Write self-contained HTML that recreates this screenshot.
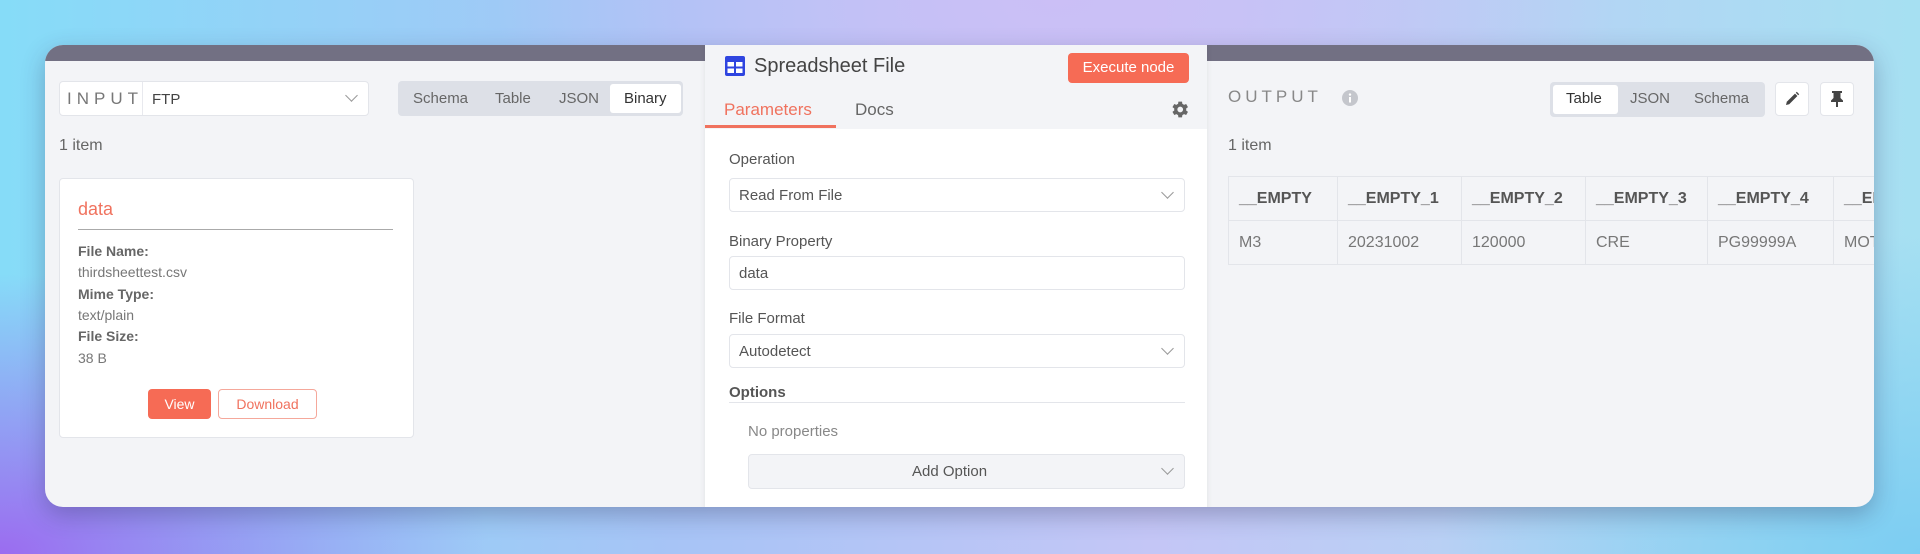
<!DOCTYPE html>
<html><head><meta charset="utf-8"><style>
*{box-sizing:border-box;margin:0;padding:0}
body{width:1920px;height:554px;overflow:hidden;font-family:"Liberation Sans",sans-serif;position:relative;
background:
radial-gradient(ellipse 700px 400px at 0% 100%,#9b6cf0 0%,rgba(155,108,240,0) 70%),
radial-gradient(ellipse 700px 350px at 55% 0%,#cbbff6 0%,rgba(203,191,246,0) 80%),
radial-gradient(ellipse 600px 400px at 100% 100%,#7ccdf2 0%,rgba(124,205,242,0) 80%),
linear-gradient(90deg,#86dcf8 0%,#a7c4f6 35%,#c4c6f6 60%,#a6e0f2 100%);}
.abs{position:absolute}
.win{left:45px;top:45px;width:1829px;height:462px;border-radius:18px;background:#f3f4f7;overflow:hidden;box-shadow:0 8px 24px rgba(40,40,80,.3)}
.bar{left:0;top:0;width:100%;height:16px;background:#727083}
.t{position:absolute;white-space:nowrap;color:#555}
.box{position:absolute;background:#fff;border:1px solid #e3e5ea;border-radius:4px}
.tabs{position:absolute;background:#dde0e7;border-radius:4px}
.tab{position:absolute;top:3px;bottom:3px;background:#fff;border-radius:3px}
.chev{position:absolute;width:9px;height:9px;border-right:1.3px solid #999;border-bottom:1.3px solid #999;transform:rotate(45deg)}
table{border-collapse:collapse;position:absolute;left:1183px;top:131px;table-layout:fixed;width:745px}
td{border:1px solid #e3e5ea;height:44px;padding-left:10px;font-size:16px;color:#777;white-space:nowrap;overflow:hidden}
tr:first-child td{font-weight:bold;color:#555;height:44px}
</style></head><body>
<div class="abs win">
<div class="abs bar"></div>
<!-- INPUT -->
<div class="box" style="left:14px;top:36px;width:310px;height:35px"></div>
<div class="abs" style="left:97px;top:37px;width:1px;height:33px;background:#e8e9ee"></div>
<div class="t" style="left:22px;top:44px;font-size:17px;letter-spacing:5px;color:#777">INPUT</div>
<div class="t" style="left:107px;top:46px;font-size:15px;color:#444">FTP</div>
<div class="chev" style="left:302px;top:46px"></div>
<div class="tabs" style="left:353px;top:36px;width:285px;height:35px"></div>
<div class="tab" style="left:565px;top:39px;width:71px;height:29px"></div>
<div class="t" style="left:368px;top:45px;font-size:15px;color:#666">Schema</div>
<div class="t" style="left:450px;top:45px;font-size:15px;color:#666">Table</div>
<div class="t" style="left:514px;top:45px;font-size:15px;color:#666">JSON</div>
<div class="t" style="left:579px;top:45px;font-size:15px;color:#333">Binary</div>
<div class="t" style="left:14px;top:92px;font-size:16px;color:#666">1 item</div>
<div class="box" style="left:14px;top:133px;width:355px;height:260px"></div>
<div class="t" style="left:33px;top:154px;font-size:18px;color:#f0725e">data</div>
<div class="abs" style="left:33px;top:184px;width:315px;height:1px;background:#aaa"></div>
<div class="t" style="left:33px;top:198px;font-size:14px;font-weight:bold;color:#666">File Name:</div>
<div class="t" style="left:33px;top:219px;font-size:14px;color:#777">thirdsheettest.csv</div>
<div class="t" style="left:33px;top:241px;font-size:14px;font-weight:bold;color:#666">Mime Type:</div>
<div class="t" style="left:33px;top:262px;font-size:14px;color:#777">text/plain</div>
<div class="t" style="left:33px;top:283px;font-size:14px;font-weight:bold;color:#666">File Size:</div>
<div class="t" style="left:33px;top:305px;font-size:14px;color:#777">38 B</div>
<div class="abs" style="left:103px;top:344px;width:63px;height:30px;background:#f66b55;border-radius:4px;color:#fff;font-size:14px;text-align:center;line-height:30px">View</div>
<div class="abs" style="left:173px;top:344px;width:99px;height:30px;background:#fff;border:1px solid #f5a89b;border-radius:4px;color:#f0725e;font-size:14px;text-align:center;line-height:28px">Download</div>
<!-- MIDDLE -->
<div class="abs" style="left:660px;top:-2px;width:502px;height:470px;background:#fff;box-shadow:0 0 6px rgba(0,0,0,.08)"></div>
<div class="abs" style="left:660px;top:-2px;width:502px;height:86px;background:#f3f4f7"></div>
<svg class="abs" style="left:680px;top:11px" width="20" height="20" viewBox="0 0 20 20"><rect x="0" y="0" width="20" height="20" rx="2" fill="#2f45e0"/><rect x="2.5" y="6" width="6.5" height="4.5" fill="#fff"/><rect x="11" y="6" width="6.5" height="4.5" fill="#fff"/><rect x="2.5" y="12.5" width="6.5" height="4.5" fill="#fff"/><rect x="11" y="12.5" width="6.5" height="4.5" fill="#fff"/></svg>
<div class="t" style="left:709px;top:10px;font-size:20px;color:#444">Spreadsheet File</div>
<div class="abs" style="left:1023px;top:8px;width:121px;height:30px;background:#f66b55;border-radius:4px;color:#fff;font-size:15px;text-align:center;line-height:30px">Execute node</div>
<div class="t" style="left:679px;top:55px;font-size:17px;color:#f0725e">Parameters</div>
<div class="t" style="left:810px;top:55px;font-size:17px;color:#666">Docs</div>
<div class="abs" style="left:660px;top:80px;width:131px;height:3px;background:#f0725e"></div>
<svg class="abs" style="left:1125px;top:55px" width="19" height="19" viewBox="0 0 24 24"><path fill="#666" d="M20.4 13.2a8 8 0 0 0 0-2.4l2.3-1.8-2.3-4-2.7 1.1a8 8 0 0 0-2.1-1.2L15.2 2h-4.6l-.4 2.9a8 8 0 0 0-2.1 1.2L5.4 5l-2.3 4 2.3 1.8a8 8 0 0 0 0 2.4L3.1 15l2.3 4 2.7-1.1a8 8 0 0 0 2.1 1.2l.4 2.9h4.6l.4-2.9a8 8 0 0 0 2.1-1.2l2.7 1.1 2.3-4zM12.9 15.6a3.6 3.6 0 1 1 0-7.2 3.6 3.6 0 0 1 0 7.2z"/></svg>
<div class="t" style="left:684px;top:106px;font-size:15px;color:#555">Operation</div>
<div class="box" style="left:684px;top:133px;width:456px;height:34px"></div>
<div class="t" style="left:694px;top:142px;font-size:15px;color:#555">Read From File</div>
<div class="chev" style="left:1118px;top:143px"></div>
<div class="t" style="left:684px;top:188px;font-size:15px;color:#555">Binary Property</div>
<div class="box" style="left:684px;top:211px;width:456px;height:34px"></div>
<div class="t" style="left:694px;top:220px;font-size:15px;color:#555">data</div>
<div class="t" style="left:684px;top:265px;font-size:15px;color:#555">File Format</div>
<div class="box" style="left:684px;top:289px;width:456px;height:34px"></div>
<div class="t" style="left:694px;top:298px;font-size:15px;color:#555">Autodetect</div>
<div class="chev" style="left:1118px;top:299px"></div>
<div class="t" style="left:684px;top:339px;font-size:15px;font-weight:bold;color:#555">Options</div>
<div class="abs" style="left:684px;top:357px;width:456px;height:1px;background:#e3e5ea"></div>
<div class="t" style="left:703px;top:378px;font-size:15px;color:#888">No properties</div>
<div class="abs" style="left:703px;top:409px;width:437px;height:35px;background:#f3f4f7;border:1px solid #e3e5ea;border-radius:4px"></div>
<div class="t" style="left:867px;top:418px;font-size:15px;color:#555">Add Option</div>
<div class="chev" style="left:1118px;top:419px"></div>
<!-- OUTPUT -->
<div class="t" style="left:1183px;top:42px;font-size:17px;letter-spacing:4px;color:#888">OUTPUT</div>
<svg class="abs" style="left:1297px;top:45px" width="16" height="16" viewBox="0 0 16 16"><circle cx="8" cy="8" r="8" fill="#c4c6cc"/><rect x="7" y="7" width="2" height="5.5" fill="#fff"/><circle cx="8" cy="4.6" r="1.2" fill="#fff"/></svg>
<div class="tabs" style="left:1505px;top:37px;width:215px;height:35px"></div>
<div class="tab" style="left:1508px;top:40px;width:65px;height:29px"></div>
<div class="t" style="left:1521px;top:45px;font-size:15px;color:#333">Table</div>
<div class="t" style="left:1585px;top:45px;font-size:15px;color:#666">JSON</div>
<div class="t" style="left:1649px;top:45px;font-size:15px;color:#666">Schema</div>
<div class="box" style="left:1730px;top:37px;width:34px;height:34px"></div>
<svg class="abs" style="left:1739px;top:46px" width="16" height="16" viewBox="0 0 16 16"><path d="M2 14l.8-3.2L11 2.6l2.4 2.4-8.2 8.2z" fill="#444"/><path d="M11.8 1.8l1-1 2.4 2.4-1 1z" fill="#444"/></svg>
<div class="box" style="left:1775px;top:37px;width:34px;height:34px"></div>
<svg class="abs" style="left:1784px;top:45px" width="16" height="18" viewBox="0 0 16 18"><path d="M3 1h10v2h-1.5v5l2.5 2.5V12H9v5H7v-5H2v-1.5L4.5 8V3H3z" fill="#444"/></svg>
<div class="t" style="left:1183px;top:92px;font-size:16px;color:#666">1 item</div>
<table>
<tr><td style="width:109px">__EMPTY</td><td style="width:124px">__EMPTY_1</td><td style="width:124px">__EMPTY_2</td><td style="width:122px">__EMPTY_3</td><td style="width:126px">__EMPTY_4</td><td style="width:140px">__EMPTY_5</td></tr>
<tr><td>M3</td><td>20231002</td><td>120000</td><td>CRE</td><td>PG99999A</td><td>MOTOR</td></tr>
</table>
</div>
</body></html>
